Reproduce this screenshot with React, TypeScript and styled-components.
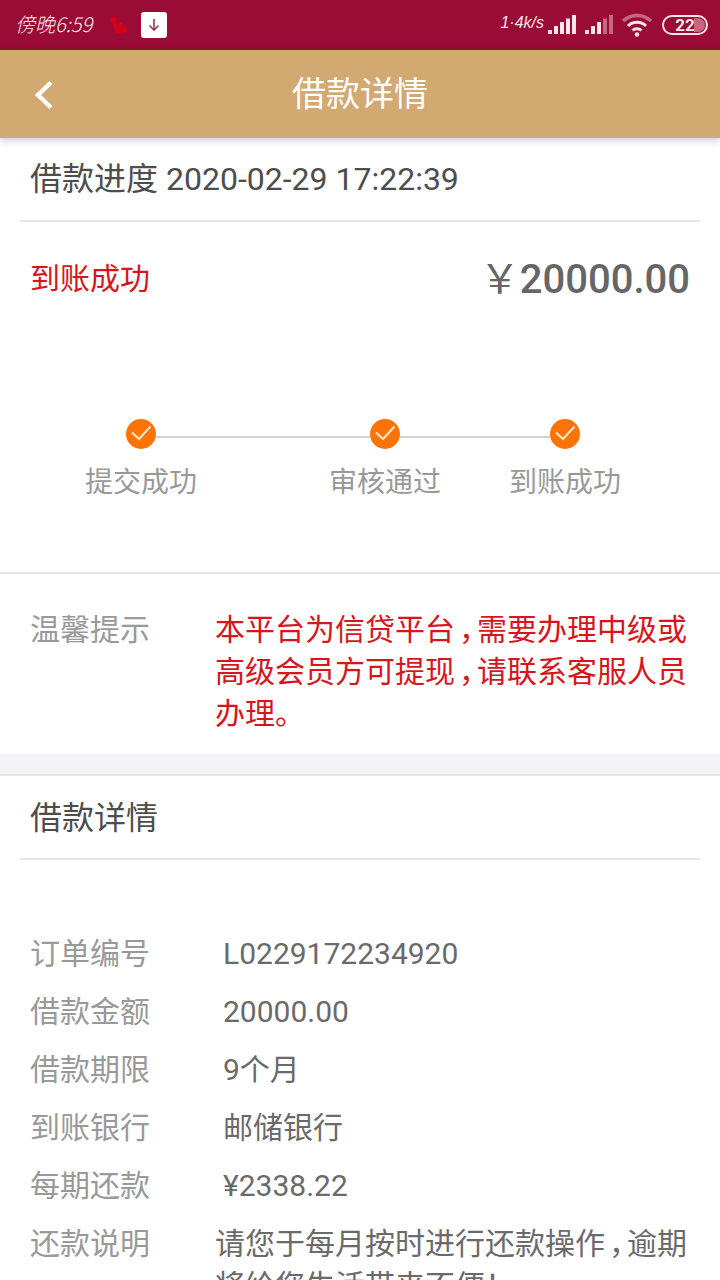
import React from "react";
import styled, { createGlobalStyle } from "styled-components";

const CJK = `"Roboto", "Noto Sans CJK SC", sans-serif`;

const GlobalStyle = createGlobalStyle`
  html, body {
    margin: 0;
    padding: 0;
    background: #fff;
    height: 100%;
    overflow: hidden;
  }
  body {
    font-family: ${CJK};
  }
  * {
    box-sizing: border-box;
  }
`;

const details = [
  { label: "订单编号", value: "L0229172234920" },
  { label: "借款金额", value: "20000.00" },
  { label: "借款期限", value: "9个月" },
  { label: "到账银行", value: "邮储银行" },
  { label: "每期还款", value: "¥2338.22" },
];

const steps = [
  { label: "提交成功", width: 244 },
  { label: "审核通过", width: 180 },
  { label: "到账成功", width: 0 },
];

function Signal({ dim }: { dim?: boolean }) {
  return (
    <SignalIcon viewBox="0 0 28 20">
      <rect x="0" y="15" width="4" height="4" fill="#fbe4ea" />
      <rect x="6" y="11" width="4" height="8" fill="#fbe4ea" />
      <rect x="12" y="7" width="4" height="12" fill="#fbe4ea" />
      <rect x="18" y="3.5" width="4" height="15.5" fill={dim ? "#c4677f" : "#fbe4ea"} />
      <rect x="24" y="0" width="4" height="19" fill={dim ? "#c4677f" : "#fbe4ea"} />
    </SignalIcon>
  );
}

function App() {
  return (
    <>
      <GlobalStyle />
      <Page>
        <StatusBar>
          <Clock>傍晚6:59</Clock>
          <RedBadge viewBox="0 0 20 20">
            <path d="M2 3c2-3 6-2 7 1s-1 4 0 5 2-2 4-2 2 3 1 4 4 0 5 3-3 5-7 5-6-3-6-6-5-7-4-10z" fill="#d3001a" />
          </RedBadge>
          <DownloadBadge>
            <svg viewBox="0 0 26 26" width="26" height="26">
              <path d="M13 7v11M8.500 13.500L13 18l4.500-4.500" stroke="#9a3a58" strokeWidth="1.600" fill="none" />
            </svg>
          </DownloadBadge>
          <StatusRight>
            <Speed>1·4k/s</Speed>
            <Signal />
            <Signal dim />
            <svg viewBox="0 0 30 24" width="30" height="24">
              <path d="M1 8c8-7.500 20-7.500 28 0" stroke="#c4677f" strokeWidth="3.500" fill="none" />
              <path d="M6 13c5-5 13-5 18 0" stroke="#fbe4ea" strokeWidth="3" fill="none" />
              <path d="M10.500 17.500c2.500-2.500 6.500-2.500 9 0" stroke="#fbe4ea" strokeWidth="3" fill="none" />
              <circle cx="15" cy="21.500" r="2.300" fill="#fbe4ea" />
            </svg>
            <Battery>
              <BatteryLevel />
              <BatteryText>22</BatteryText>
            </Battery>
          </StatusRight>
        </StatusBar>

        <Header>
          <BackButton viewBox="0 0 22 32">
            <path d="M18 3.500L5 16l13 12.500" stroke="#fff" strokeWidth="4.500" fill="none" />
          </BackButton>
          <HeaderTitle>借款详情</HeaderTitle>
        </Header>

        <SectionTitle>借款进度 2020-02-29 17:22:39</SectionTitle>

        <StatusRow>
          <StatusText>到账成功</StatusText>
          <Amount>
            <Yen>￥</Yen>20000.00
          </Amount>
        </StatusRow>

        <Steps>
          {steps.map((step) => (
            <Step key={step.label}>
              <StepTrack>
                <StepDot>
                  <svg viewBox="0 0 30 30" width="30" height="30">
                    <path d="M6 13.500l7 6.500L24.500 7.500" stroke="#fde9d2" strokeWidth="2" fill="none" />
                  </svg>
                </StepDot>
                {step.width > 0 && <StepLine $width={step.width - 30} />}
              </StepTrack>
              <StepLabel>{step.label}</StepLabel>
            </Step>
          ))}
        </Steps>

        <Tips>
          <TipsLabel>温馨提示</TipsLabel>
          <TipsText>
            <TextLine>
              本平台为信贷平台<Comma>，</Comma>需要办理中级或
            </TextLine>
            <TextLine>
              高级会员方可提现<Comma>，</Comma>请联系客服人员
            </TextLine>
            <TextLine>办理。</TextLine>
          </TipsText>
        </Tips>

        <Gap />

        <DetailHeading>借款详情</DetailHeading>

        <DetailList>
          {details.map((row) => (
            <DetailRow key={row.label}>
              <DetailLabel>{row.label}</DetailLabel>
              <DetailValue>{row.value}</DetailValue>
            </DetailRow>
          ))}
          <DetailRow>
            <DetailLabel>还款说明</DetailLabel>
            <DetailNote>
              <TextLine>
                请您于每月按时进行还款操作<Comma>，</Comma>逾期
              </TextLine>
              <TextLine>将给您生活带来不便！</TextLine>
            </DetailNote>
          </DetailRow>
        </DetailList>
      </Page>
    </>
  );
}

export default App;

const Page = styled.div`
  width: 720px;
  height: 1280px;
  overflow: hidden;
  background: #fff;
`;

const StatusBar = styled.div`
  display: flex;
  align-items: center;
  height: 50px;
  padding: 0 12px 0 15px;
  background: #9a0b36;
`;

const Clock = styled.span`
  width: 90px;
  margin-top: -3px;
  font-family: "Noto Sans CJK SC", sans-serif;
  font-size: 20px;
  font-weight: 300;
  font-style: italic;
  color: #fbe4ea;
  white-space: nowrap;
`;

const RedBadge = styled.svg`
  width: 20px;
  height: 20px;
  margin-left: 3px;
`;

const DownloadBadge = styled.div`
  display: flex;
  width: 26px;
  height: 26px;
  margin-left: 13px;
  border-radius: 3px;
  background: #fff;
`;

const StatusRight = styled.div`
  display: flex;
  align-items: center;
  margin-left: auto;
  gap: 9px;
`;

const Speed = styled.span`
  margin: -4px -5px 0 0;
  font-family: "Liberation Sans", sans-serif;
  font-size: 16px;
  font-style: italic;
  color: #fbe4ea;
`;

const SignalIcon = styled.svg`
  width: 28px;
  height: 20px;
`;

const Battery = styled.div`
  position: relative;
  display: flex;
  align-items: center;
  justify-content: center;
  width: 46px;
  height: 20px;
  margin-left: 1px;
  overflow: hidden;
  border: 2px solid #fbe4ea;
  border-radius: 10px;
`;

const BatteryLevel = styled.div`
  position: absolute;
  top: 1px;
  right: 1px;
  width: 11px;
  height: 14px;
  border-radius: 0 7px 7px 0;
  background: #c4677f;
`;

const BatteryText = styled.span`
  position: relative;
  font-family: "Roboto", sans-serif;
  font-size: 17px;
  font-weight: 700;
  color: #fbe4ea;
`;

const Header = styled.div`
  position: relative;
  display: flex;
  align-items: center;
  justify-content: center;
  height: 88px;
  padding-bottom: 6px;
  background: #d2a971;
  box-shadow: 0 2px 8px rgba(0, 0, 0, 0.22);
`;

const BackButton = styled.svg`
  position: absolute;
  left: 33px;
  top: 29px;
  width: 22px;
  height: 32px;
`;

const HeaderTitle = styled.h1`
  margin: 0;
  font-size: 34px;
  font-weight: 400;
  color: #fff;
`;

const SectionTitle = styled.div`
  height: 84px;
  margin: 0 20px;
  padding: 20px 10px 0;
  border-bottom: 2px solid #e6e6e6;
  font-size: 32px;
  line-height: 42px;
  color: #4d4d4d;
`;

const StatusRow = styled.div`
  display: flex;
  align-items: center;
  justify-content: space-between;
  height: 112px;
  padding: 0 30px;
`;

const StatusText = styled.span`
  margin-top: -4px;
  font-size: 30px;
  color: #d8141c;
`;

const Amount = styled.span`
  margin-top: -4px;
  font-size: 40px;
  font-weight: 500;
  color: #666;
`;

const Yen = styled.span`
  font-weight: 400;
`;

const Steps = styled.div`
  display: flex;
  height: 240px;
  padding: 85px 0 0 126px;
  border-bottom: 2px solid #e6e6e6;
`;

const Step = styled.div`
  display: flex;
  flex-direction: column;
`;

const StepTrack = styled.div`
  display: flex;
  align-items: center;
  height: 30px;
`;

const StepDot = styled.div`
  width: 30px;
  height: 30px;
  border-radius: 50%;
  background: #fb7405;
`;

const StepLine = styled.div<{ $width: number }>`
  width: ${(p) => p.$width}px;
  height: 2px;
  margin-top: 5px;
  background: #d0d0d0;
`;

const StepLabel = styled.span`
  width: 110px;
  margin: 18px 0 0 -41px;
  font-size: 28px;
  line-height: 32px;
  white-space: nowrap;
  color: #999;
`;

const Tips = styled.div`
  display: flex;
  height: 180px;
  padding: 35px 30px 0;
`;

const TipsLabel = styled.span`
  flex: 0 0 185px;
  font-size: 30px;
  line-height: 42px;
  color: #999;
`;

const TipsText = styled.p`
  margin: 0;
  font-size: 30px;
  line-height: 42px;
  color: #d8141c;
`;

const TextLine = styled.span`
  display: block;
  white-space: nowrap;
`;

const Comma = styled.span`
  padding: 0 3px 0 4px;
  font-feature-settings: "halt" 1;
`;

const Gap = styled.div`
  height: 22px;
  background: #f4f4f8;
  border-bottom: 2px solid #e6e6e6;
`;

const DetailHeading = styled.div`
  height: 84px;
  margin: 0 20px;
  padding: 21px 10px 0;
  border-bottom: 2px solid #e6e6e6;
  font-size: 32px;
  line-height: 42px;
  color: #4d4d4d;
`;

const DetailList = styled.div`
  display: flex;
  flex-direction: column;
  gap: 16px;
  padding: 73px 30px 0;
`;

const DetailRow = styled.div`
  display: flex;
  align-items: flex-start;
`;

const DetailLabel = styled.span`
  flex: 0 0 185px;
  font-size: 30px;
  line-height: 42px;
  color: #999;
`;

const DetailValue = styled.span`
  margin-left: 8px;
  font-size: 30px;
  line-height: 42px;
  color: #6a6a6a;
`;

const DetailNote = styled.span`
  font-size: 30px;
  line-height: 42px;
  color: #6a6a6a;
`;
